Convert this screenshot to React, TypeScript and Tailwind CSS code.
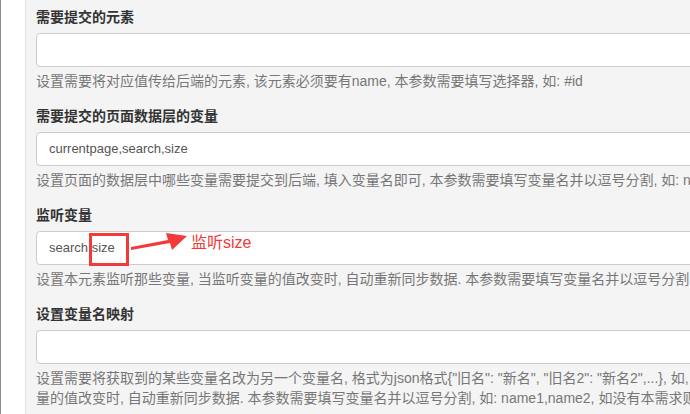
import React from "react";

const font = { fontFamily: '"Liberation Sans", Arial, "Noto Sans CJK SC", sans-serif' };

function Group({
  title,
  value,
  help,
  children,
}: {
  title: string;
  value?: string;
  help: React.ReactNode;
  children?: React.ReactNode;
}) {
  return (
    <div className="pb-[15px]">
      <div className="h-[20px] leading-[20px] text-[14px] font-bold text-[#333] whitespace-nowrap">{title}</div>
      <div className="relative mt-[6px] h-[34px] w-[720px] rounded-[4px] border border-[#cccccc] bg-white px-[12px] flex items-center text-[13px] text-[#555] whitespace-nowrap">
        {value}
        {children}
      </div>
      <div className="mt-[4px] text-[14px] leading-[20px] text-[#777] whitespace-nowrap">{help}</div>
    </div>
  );
}

export default function App() {
  return (
    <div className="w-[690px] h-[414px] overflow-hidden flex bg-white" style={font}>
      <div className="w-[1px] bg-[#8a8a8a] shrink-0" />
      <div className="w-[24px] bg-white shrink-0" />
      <div className="w-[1px] bg-[#e2e2e2] shrink-0" />
      <div className="flex-1 bg-[#f4f4f4] pl-[10px] pt-[7px] overflow-hidden">
        <Group
          title="需要提交的元素"
          help="设置需要将对应值传给后端的元素, 该元素必须要有name, 本参数需要填写选择器, 如: #id"
        />
        <Group
          title="需要提交的页面数据层的变量"
          value="currentpage,search,size"
          help="设置页面的数据层中哪些变量需要提交到后端, 填入变量名即可, 本参数需要填写变量名并以逗号分割, 如: name1,name2"
        />
        <Group
          title="监听变量"
          value="search,size"
          help="设置本元素监听那些变量, 当监听变量的值改变时, 自动重新同步数据. 本参数需要填写变量名并以逗号分割, 如: name1,name2"
        >
          <div className="absolute left-[52px] top-[1px] w-[40px] h-[33px] border-[3px] border-[#f23a3a]" />
          <svg className="absolute left-[93px] top-[-1px]" width="60" height="24" viewBox="0 0 60 24">
            <polygon points="1,16 1,19 40,12 42,19 57,5 36,2 38,9" fill="#f23a3a" />
          </svg>
          <span className="absolute left-[154px] top-[1px] text-[16px] leading-[20px] text-[#f23a3a]">监听size</span>
        </Group>
        <Group
          title="设置变量名映射"
          help={
            <>
              <div>设置需要将获取到的某些变量名改为另一个变量名, 格式为json格式{'{"旧名": "新名", "旧名2": "新名2",...}'}, 如, 如果本元素监听了变量, 当监听变</div>
              <div>量的值改变时, 自动重新同步数据. 本参数需要填写变量名并以逗号分割, 如: name1,name2, 如没有本需求则不需要填写</div>
            </>
          }
        />
      </div>
    </div>
  );
}
